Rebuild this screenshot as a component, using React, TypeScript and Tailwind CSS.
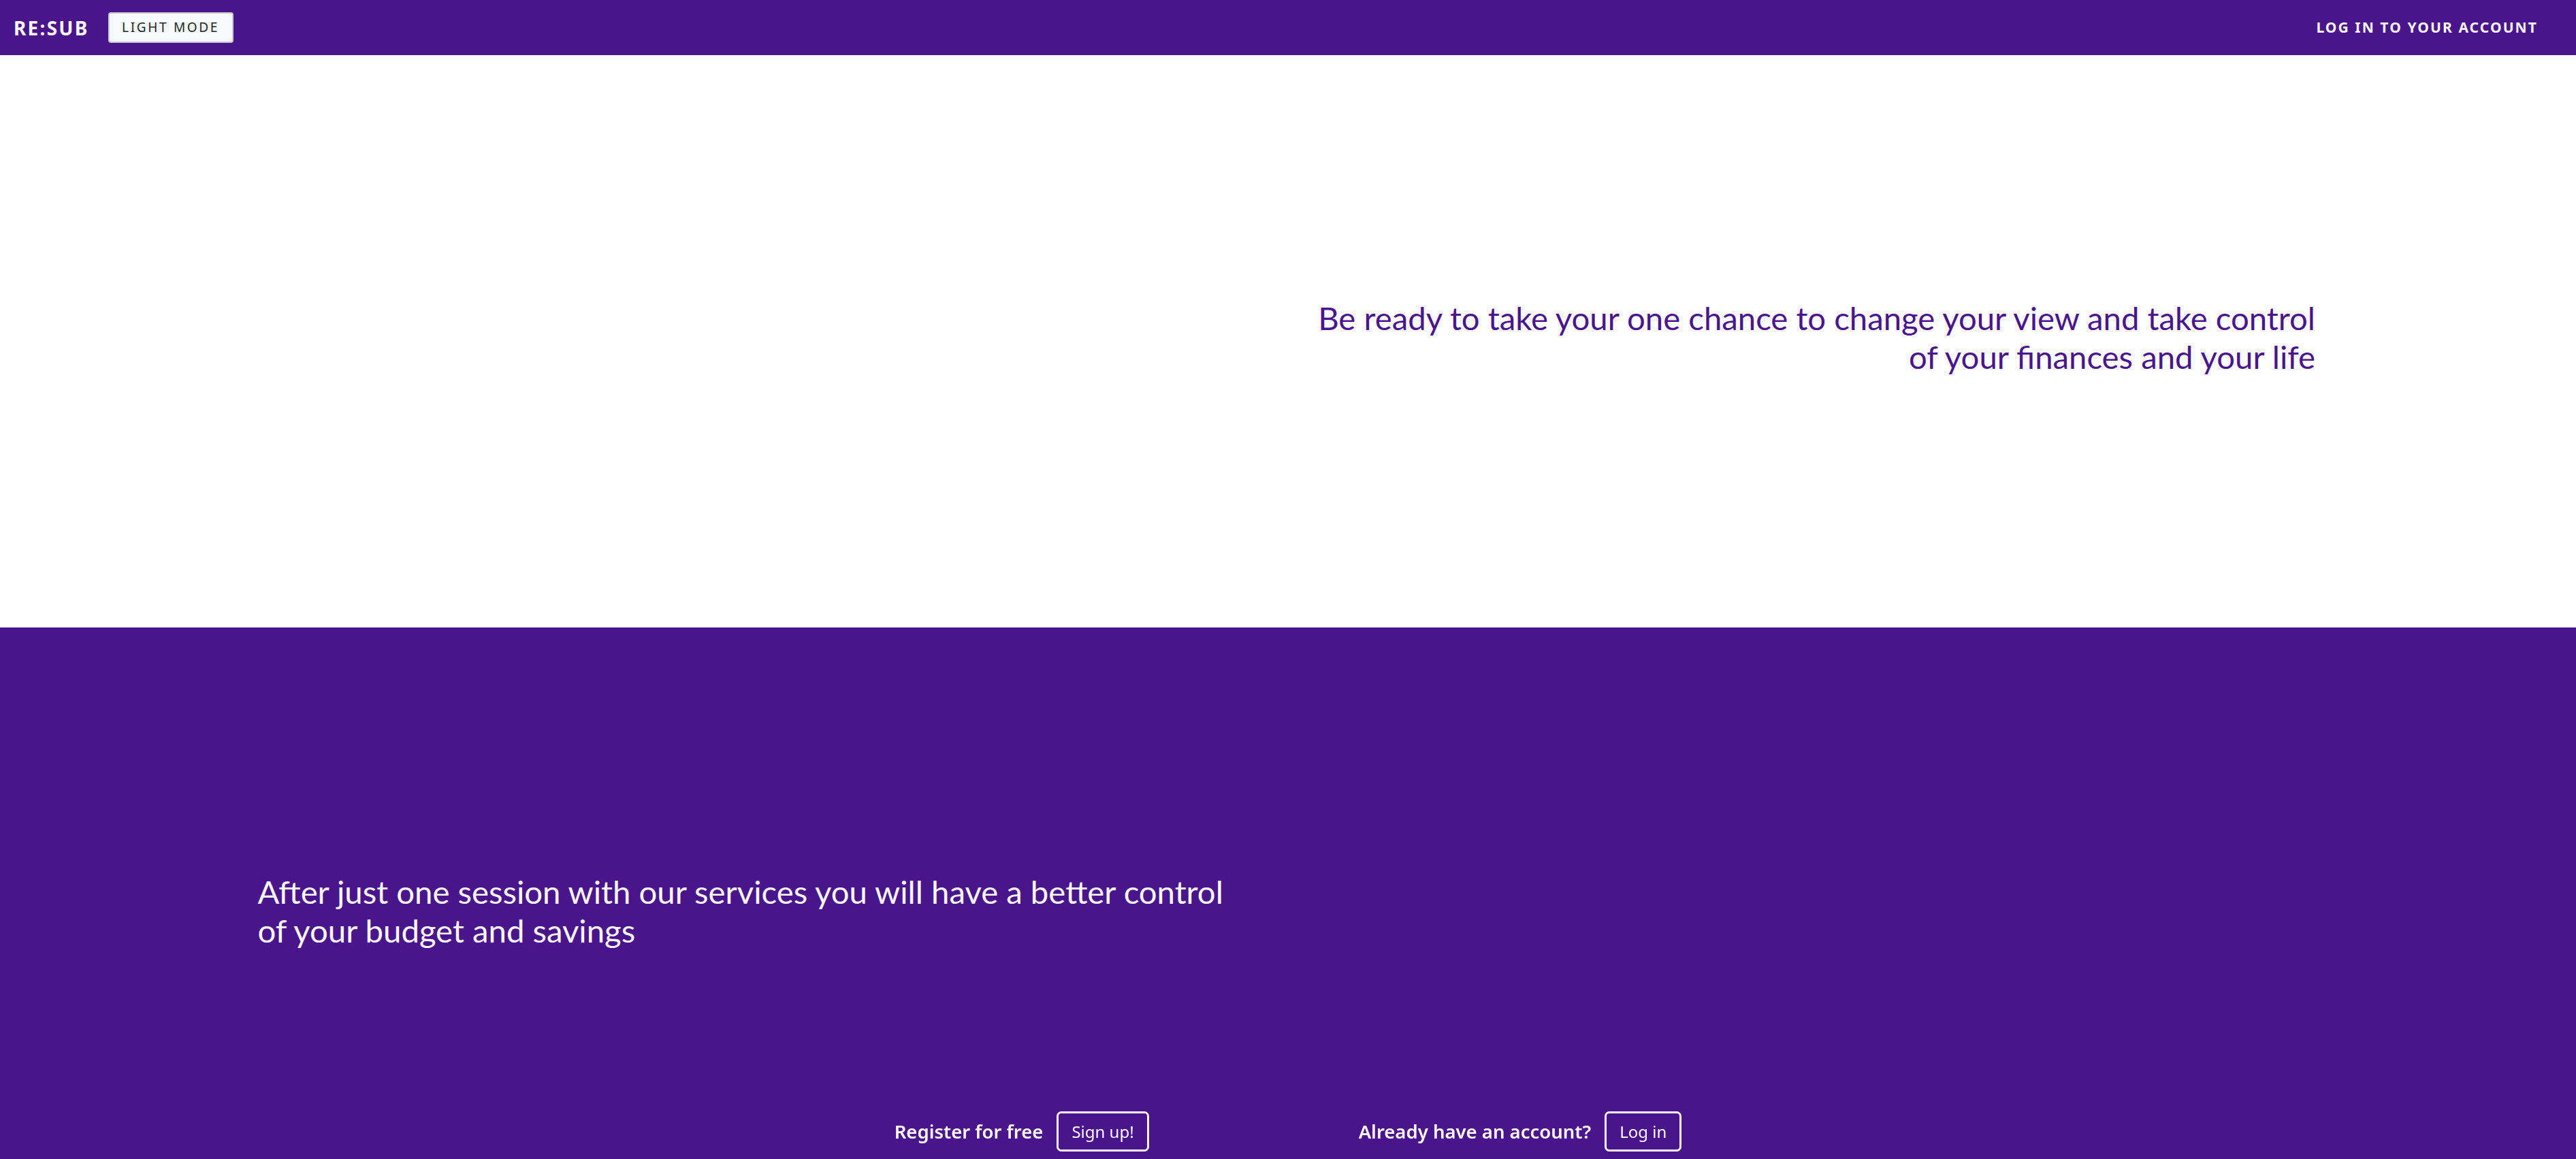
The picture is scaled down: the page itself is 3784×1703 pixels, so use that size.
import React from 'react';

const sans = "font-['Noto_Sans','Open_Sans',sans-serif]";
const lato = "font-['Lato','Noto_Sans',sans-serif]";

function Header() {
  return (
    <header className={`h-[81px] bg-[#4A148C] flex items-center justify-between pl-[20px] pr-[56px] ${sans}`}>
      <div className="flex items-center gap-[28px]">
        <span className="text-white font-bold text-[28px] tracking-[0.08em]">RE:SUB</span>
        <button className="h-[45px] w-[184px] bg-[#f8f9fa] border-2 border-[#c9cad2] rounded-[4px] text-[#212529] text-[19px] font-normal tracking-[0.14em]">
          LIGHT MODE
        </button>
      </div>
      <a className="text-white font-bold text-[21px] tracking-[0.1em]">LOG IN TO YOUR ACCOUNT</a>
    </header>
  );
}

function Footer() {
  return (
    <div className={`fixed bottom-0 inset-x-0 flex justify-center gap-[308px] pb-[11px] ${sans}`}>
      <div className="flex items-center gap-[20px]">
        <span className="text-white font-semibold text-[27.5px]">Register for free</span>
        <button className="h-[59px] px-[19px] border-[3px] border-white rounded-[7px] text-white text-[24px]">Sign up!</button>
      </div>
      <div className="flex items-center gap-[20px]">
        <span className="text-white font-semibold text-[27.5px]">Already have an account?</span>
        <button className="h-[59px] px-[19px] border-[3px] border-white rounded-[7px] text-white text-[24px]">Log in</button>
      </div>
    </div>
  );
}

export default function App() {
  return (
    <div className="min-h-screen bg-white">
      <Header />
      <section className="h-[841px] bg-white grid grid-cols-2 items-center pl-[10%] pr-[383px]">
        <div />
        <h1 className={`text-right text-[47.3px] leading-[1.2] text-[#4A148C] mb-3 ${lato}`}>
          Be ready to take your one chance to change your view and take control
          <br />
          of your finances and your life
        </h1>
      </section>
      <section className="h-[841px] bg-[#4A148C] grid grid-cols-2 items-center px-[10%]">
        <h1 className={`text-left text-[47.3px] leading-[1.2] text-white mb-2 ${lato}`}>
          After just one session with our services you will have a better control
          <br />
          of your budget and savings
        </h1>
        <div />
      </section>
      <Footer />
    </div>
  );
}
